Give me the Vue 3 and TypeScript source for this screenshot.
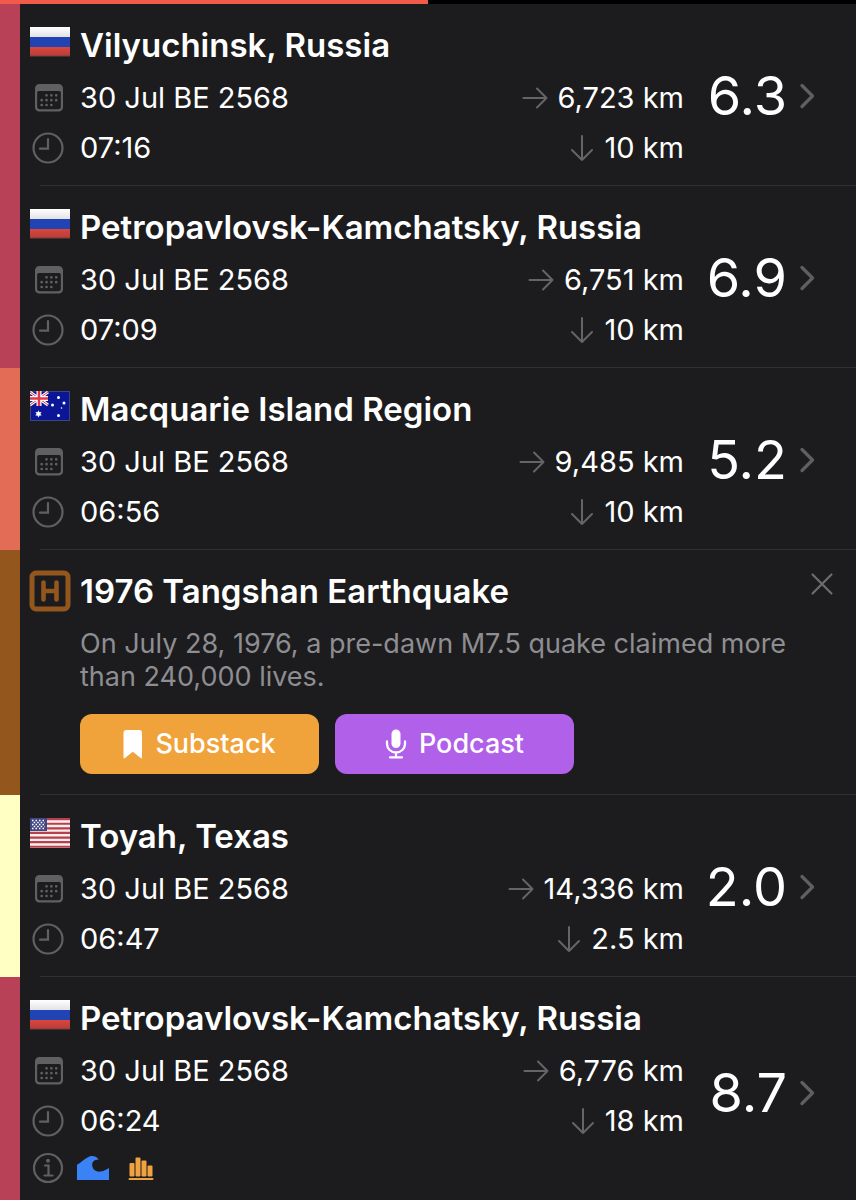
<script setup lang="ts">
import { ref } from 'vue'

type Country = 'ru' | 'au' | 'us'
type Level = 'severe' | 'strong' | 'minor'

interface Quake {
  id: number
  place: string
  country: Country
  level: Level
  date: string
  time: string
  distance: string
  depth: string
  magnitude: string
  alerts?: boolean
}

const recent: Quake[] = [
  { id: 1, place: 'Vilyuchinsk, Russia', country: 'ru', level: 'severe', date: '30 Jul BE 2568', time: '07:16', distance: '6,723 km', depth: '10 km', magnitude: '6.3' },
  { id: 2, place: 'Petropavlovsk-Kamchatsky, Russia', country: 'ru', level: 'severe', date: '30 Jul BE 2568', time: '07:09', distance: '6,751 km', depth: '10 km', magnitude: '6.9' },
  { id: 3, place: 'Macquarie Island Region', country: 'au', level: 'strong', date: '30 Jul BE 2568', time: '06:56', distance: '9,485 km', depth: '10 km', magnitude: '5.2' },
]
const earlier: Quake[] = [
  { id: 4, place: 'Toyah, Texas', country: 'us', level: 'minor', date: '30 Jul BE 2568', time: '06:47', distance: '14,336 km', depth: '2.5 km', magnitude: '2.0' },
  { id: 5, place: 'Petropavlovsk-Kamchatsky, Russia', country: 'ru', level: 'severe', date: '30 Jul BE 2568', time: '06:24', distance: '6,776 km', depth: '18 km', magnitude: '8.7', alerts: true },
]
const groups = [
  { key: 'recent', quakes: recent },
  { key: 'earlier', quakes: earlier },
]

const progress = ref(50)
const storyVisible = ref(true)
</script>

<template>
  <main class="feed">
    <div class="progress" role="progressbar" aria-label="Loading" :aria-valuenow="progress">
      <div class="progress-fill" :style="{ width: progress + '%' }"></div>
    </div>

    <template v-for="group in groups" :key="group.key">
      <section
        v-if="group.key === 'earlier' && storyVisible"
        class="entry history"
      >
        <div class="body story">
          <svg class="badge" width="42" height="42" viewBox="0 0 42 42" fill="none" stroke="currentColor">
            <rect x="3" y="3" width="36" height="36" rx="4" stroke-width="5" />
            <path d="M14.500 12.500v17M27.500 12.500v17M14.500 21h13" stroke-width="4.600" stroke-linecap="round" />
          </svg>
          <h2 class="title">1976 Tangshan Earthquake</h2>
          <button class="close" type="button" aria-label="Dismiss" @click="storyVisible = false">
            <svg width="24" height="24" viewBox="0 0 24 24" fill="none" stroke="currentColor" stroke-width="2.200" stroke-linecap="round">
              <path d="M2.500 2.500l19 19M21.500 2.500l-19 19" />
            </svg>
          </button>
          <p class="summary">On July 28, 1976, a pre-dawn M7.5 quake claimed more than 240,000 lives.</p>
          <div class="actions">
            <button class="action substack" type="button">
              <svg width="20" height="30" viewBox="0 0 20 30" fill="currentColor">
                <path d="M3.500 1h12.500a3 3 0 0 1 3 3v24.500q0 1.500-1.400.6L9.800 22.800 2 29.100Q.5 30 .5 28.500V4a3 3 0 0 1 3-3z" />
              </svg>
              <span>Substack</span>
            </button>
            <button class="action podcast" type="button">
              <svg width="22" height="30" viewBox="0 0 22 30" fill="none" stroke="currentColor" stroke-width="2.300" stroke-linecap="round">
                <rect x="6.500" y=".5" width="9" height="18.500" rx="4.500" fill="currentColor" stroke="none" />
                <path d="M2 12.500v2.500a9 8.500 0 0 0 18 0v-2.500M11 24v4M5 28.300h12" />
              </svg>
              <span>Podcast</span>
            </button>
          </div>
        </div>
      </section>

      <a
        v-for="quake in group.quakes"
        :key="quake.id"
        class="entry"
        :class="quake.level"
        :href="'#quake-' + quake.id"
      >
        <div class="body quake">
          <svg v-if="quake.country === 'ru'" class="flag" width="40" height="30" viewBox="0 0 40 30">
            <defs>
              <linearGradient id="ru-white" x2="0" y2="1"><stop stop-color="#fff" /><stop offset="1" stop-color="#e3e3e6" /></linearGradient>
              <linearGradient id="ru-red" x2="0" y2="1"><stop stop-color="#d9463c" /><stop offset="1" stop-color="#b83d38" /></linearGradient>
            </defs>
            <rect y="0" width="40" height="10" fill="url(#ru-white)" />
            <rect y="10" width="40" height="10" fill="#2143b4" />
            <rect y="20" width="40" height="9" fill="url(#ru-red)" />
            <path d="M0 29h40" stroke="#74413f" stroke-width="1" />
          </svg>
          <svg v-else-if="quake.country === 'au'" class="flag" width="40" height="30" viewBox="0 0 40 30">
            <rect width="40" height="30" fill="#3c4482" />
            <rect x="1" y="1" width="38" height="28" fill="#0a1697" />
            <path d="M0 1l18 13M18 1L0 14" stroke="#fff" stroke-width="3" />
            <path d="M0 1l18 13M18 1L0 14" stroke="#e0384a" stroke-width="1" />
            <path d="M9 0v15M0 7.500h18" stroke="#fff" stroke-width="5" />
            <path d="M9 0v15M0 7.500h18" stroke="#e0384a" stroke-width="2.500" />
            <path d="M8.500 19.300l.9 2 2.200-.4-1.200 1.900 1.300 1.800-2.200-.1-1 2-1-2-2.200.1 1.300-1.800-1.200-1.900 2.200.4z" fill="#fff" />
            <g fill="#fff">
              <circle cx="28.500" cy="6.500" r="1.500" />
              <circle cx="22.500" cy="14" r="1.500" />
              <circle cx="34" cy="12" r="1.500" />
              <circle cx="28.500" cy="24.500" r="1.500" />
              <circle cx="31.500" cy="17" r=".8" />
            </g>
          </svg>
          <svg v-else class="flag" width="40" height="30" viewBox="0 0 40 30">
            <rect width="40" height="30" fill="#f7eeee" />
            <path d="M0 1.150h40M0 5.750h40M0 10.350h40M0 14.950h40M0 19.550h40M0 24.150h40M0 28.750h40" stroke="#b83f4b" stroke-width="2.200" />
            <rect width="17" height="13" fill="#404782" />
            <path d="M2 2.500h14M2 6.500h14M2 10.500h14" stroke="#fff" stroke-width="1.500" stroke-dasharray="1.500 2" />
            <path d="M3.700 4.500h11M3.700 8.500h11" stroke="#fff" stroke-width="1.500" stroke-dasharray="1.500 2" />
          </svg>
          <h2 class="title">{{ quake.place }}</h2>

          <svg class="icon" width="28" height="28" viewBox="1 1 26 26">
            <path fill="currentColor" fill-rule="evenodd" d="M5 1h18a4 4 0 0 1 4 4v17.500a4 4 0 0 1-4 4H5a4 4 0 0 1-4-4V5a4 4 0 0 1 4-4zM3 9v13a2.500 2.500 0 0 0 2.500 2.500h17a2.500 2.500 0 0 0 2.500-2.500V9a1.500 1.500 0 0 0-1.500-1.500h-19A1.500 1.500 0 0 0 3 9z" />
            <path stroke="currentColor" stroke-width="2.500" stroke-linecap="round" d="M11.700 11.500h0M16.200 11.500h0M20.700 11.500h0M7.200 16h0M11.700 16h0M16.200 16h0M20.700 16h0M7.200 20.500h0M11.700 20.500h0M16.200 20.500h0" />
          </svg>
          <span class="value">{{ quake.date }}</span>
          <span class="measure">
            <svg width="26" height="24" viewBox="0 0 26 24" fill="none" stroke="currentColor" stroke-width="2" stroke-linecap="round" stroke-linejoin="round">
              <path d="M1.500 12h23M15 2.500l9.500 9.500-9.500 9.500" />
            </svg>
            <span class="value">{{ quake.distance }}</span>
          </span>

          <svg class="icon clock" width="32" height="32" viewBox="0 0 32 32" fill="none" stroke="currentColor" stroke-width="2.200" stroke-linecap="round">
            <circle cx="16" cy="16" r="14.500" />
            <path d="M16 7v9.700H8" />
          </svg>
          <span class="value">{{ quake.time }}</span>
          <span class="measure">
            <svg width="24" height="26" viewBox="0 0 24 26" fill="none" stroke="currentColor" stroke-width="2" stroke-linecap="round" stroke-linejoin="round">
              <path d="M12 1v24M2 15l10 10 10-10" />
            </svg>
            <span class="value">{{ quake.depth }}</span>
          </span>

          <template v-if="quake.alerts">
            <svg class="icon clock raised" width="32" height="32" viewBox="0 0 32 32" fill="none" stroke="currentColor" stroke-width="2.200" stroke-linecap="round">
              <circle cx="16" cy="16" r="14" />
              <path d="M13 13.500h3.500v9.500M12.500 23.500h8" />
              <circle cx="16" cy="8.800" r="2" fill="currentColor" stroke="none" />
            </svg>
            <span class="alerts raised">
              <svg width="34" height="26" viewBox="0 0 34 26">
                <path fill="#3c82f7" d="M1 9.800C5 7.500 8.500 4 12 2.200c3.500-2 8-1.300 10.800 2.300-4.500-.3-7.300 2.700-6.500 6.500.8 4.200 4.500 6.200 8.500 5.500 3.500-.6 6-2 8.200-3.500V25H1z" />
              </svg>
              <svg width="26" height="26" viewBox="0 0 26 26" fill="#efa23f">
                <rect x="1.500" y="8" width="5" height="13.500" rx="1" />
                <rect x="7.500" y="2.500" width="5" height="19" rx="1" />
                <rect x="13.500" y="5.500" width="5" height="16" rx="1" />
                <rect x="19.500" y="10.500" width="5" height="11" rx="1" />
                <rect x=".5" y="23" width="25" height="2" rx="1" />
              </svg>
            </span>
          </template>

          <strong class="magnitude">{{ quake.magnitude }}</strong>
          <svg class="chevron" width="17" height="26" viewBox="0 0 17 26" fill="none" stroke="currentColor" stroke-width="3.300" stroke-linecap="round" stroke-linejoin="round">
            <path d="M3 2.500L13.500 13 3 23.500" />
          </svg>
        </div>
      </a>
    </template>
  </main>
</template>

<style>
body {
  margin: 0;
  background: #1c1c1e;
}
</style>

<style scoped>
.feed {
  height: 100vh;
  overflow-y: auto;
  scrollbar-width: none;
  background: #1c1c1e;
  color: #fff;
  font-family: Inter, "Liberation Sans", sans-serif;
  font-size: 29px;
}
.progress {
  height: 4px;
  background: #000;
}
.progress-fill {
  height: 100%;
  background: #f25a49;
}
.entry {
  display: block;
  border-left: 20px solid;
  color: inherit;
  text-decoration: none;
}
.entry::after {
  content: "";
  display: block;
  height: 1px;
  margin-left: 20px;
  background: #303032;
}
.severe { border-left-color: #b94157; }
.strong { border-left-color: #e26c56; }
.minor { border-left-color: #ffffc3; }
.history { border-left-color: #93561d; }
.body {
  display: grid;
  align-items: center;
}
.quake {
  grid-template-columns: 60px 1fr auto 103px 69px;
  grid-template-rows: 56px 50px 50px;
  grid-auto-rows: 48px;
  padding: 13px 0 12px;
}
.title {
  margin: 0;
  font-size: 33px;
  font-weight: 560;
  line-height: 40px;
  white-space: nowrap;
}
.quake .title {
  grid-column: 2 / 4;
}
.flag {
  justify-self: center;
  margin-bottom: 6px;
}
.icon {
  justify-self: center;
  margin-right: 2px;
  color: #606062;
}
.clock {
  margin-right: 4px;
}
.value {
  padding-bottom: 2px;
}
.measure {
  display: flex;
  align-items: center;
  justify-content: flex-end;
  gap: 10px;
}
.measure svg {
  color: #656568;
}
.alerts {
  display: flex;
  gap: 18px;
  margin-left: -4px;
}
.raised {
  margin-bottom: 4px;
}
.magnitude,
.chevron {
  grid-row: 1 / span 3;
  margin-top: 2px;
}
.magnitude {
  grid-column: 4;
  justify-self: end;
  font-size: 54px;
  font-weight: 400;
  line-height: 60px;
}
.chevron {
  grid-column: 5;
  margin-left: 12px;
  color: #5f5f61;
}
.quake:has(.alerts) .magnitude,
.quake:has(.alerts) .chevron {
  grid-row-end: span 4;
}
.story {
  grid-template-columns: 60px 1fr 56px;
  grid-template-rows: 56px;
  padding: 13px 0 20px;
}
.badge {
  justify-self: center;
  color: #93561d;
}
.close {
  display: flex;
  width: 44px;
  height: 44px;
  padding: 0;
  margin-bottom: 14px;
  align-items: center;
  justify-content: center;
  border: 0;
  background: none;
  color: #6c6c6f;
}
.summary {
  grid-column: 2 / 4;
  margin: 8px 40px 21px 0;
  color: #8e8e92;
  font-size: 27px;
  line-height: 33px;
}
.actions {
  display: flex;
  grid-column: 2 / 4;
  gap: 16px;
}
.action {
  display: flex;
  width: 239px;
  height: 60px;
  align-items: center;
  justify-content: center;
  gap: 12px;
  border: 0;
  border-radius: 12px;
  color: #fff;
  font: 500 27px/34px Inter, "Liberation Sans", sans-serif;
}
.substack { background: #f0a33b; }
.podcast { background: #b160e9; }
</style>
